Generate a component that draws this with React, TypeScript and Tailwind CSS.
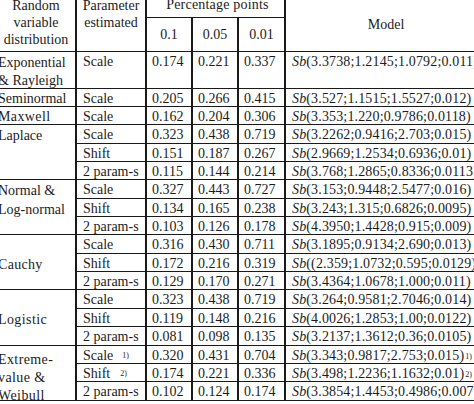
import React from "react";

type Row = { p: React.ReactNode; a: string; b: string; c: string; m: React.ReactNode };
type Group = { label: React.ReactNode; labelCls: string; rows: Row[]; tall?: boolean };

const M = (s: string, sup?: string) => (
  <>
    <i>Sb</i>
    {s}
    {sup ? <sup className="text-[8px] relative top-[-1px] ml-[1px] tracking-normal">{sup}</sup> : null}
  </>
);

const groups: Group[] = [
  {
    label: (
      <>
        Exponential
        <br />& Rayleigh
      </>
    ),
    labelCls: "row-span-2 pt-[2px] leading-[18px]",
    tall: true,
    rows: [{ p: "Scale", a: "0.174", b: "0.221", c: "0.337", m: M("(3.3738;1.2145;1.0792;0.011)") }],
  },
  {
    label: "Seminormal",
    labelCls: "pt-[2px] leading-[15px]",
    rows: [{ p: "Scale", a: "0.205", b: "0.266", c: "0.415", m: M("(3.527;1.1515;1.5527;0.012)") }],
  },
  {
    label: "Maxwell",
    labelCls: "pt-[2px] leading-[15px] tracking-[0.4px]",
    rows: [{ p: "Scale", a: "0.162", b: "0.204", c: "0.306", m: M("(3.353;1.220;0.9786;0.0118)") }],
  },
  {
    label: "Laplace",
    labelCls: "row-span-3 pt-[2px] leading-[18px]",
    rows: [
      { p: "Scale", a: "0.323", b: "0.438", c: "0.719", m: M("(3.2262;0.9416;2.703;0.015)") },
      { p: "Shift", a: "0.151", b: "0.187", c: "0.267", m: M("(2.9669;1.2534;0.6936;0.01)") },
      { p: "2 param-s", a: "0.115", b: "0.144", c: "0.214", m: M("(3.768;1.2865;0.8336;0.0113)") },
    ],
  },
  {
    label: (
      <>
        Normal &amp;
        <br />
        Log-normal
      </>
    ),
    labelCls: "row-span-3 pt-[2px] leading-[18.3px]",
    rows: [
      { p: "Scale", a: "0.327", b: "0.443", c: "0.727", m: M("(3.153;0.9448;2.5477;0.016)") },
      { p: "Shift", a: "0.134", b: "0.165", c: "0.238", m: M("(3.243;1.315;0.6826;0.0095)") },
      { p: "2 param-s", a: "0.103", b: "0.126", c: "0.178", m: M("(4.3950;1.4428;0.915;0.009)") },
    ],
  },
  {
    label: "Cauchy",
    labelCls: "row-span-3 pt-[21px] leading-[18px] tracking-[0.3px]",
    rows: [
      { p: "Scale", a: "0.316", b: "0.430", c: "0.711", m: M("(3.1895;0.9134;2.690;0.013)") },
      { p: "Shift", a: "0.172", b: "0.216", c: "0.319", m: M("((2.359;1.0732;0.595;0.0129)") },
      { p: "2 param-s", a: "0.129", b: "0.170", c: "0.271", m: M("(3.4364;1.0678;1.000;0.011)") },
    ],
  },
  {
    label: "Logistic",
    labelCls: "row-span-3 pt-[21px] leading-[18px] tracking-[0.4px]",
    rows: [
      { p: "Scale", a: "0.323", b: "0.438", c: "0.719", m: M("(3.264;0.9581;2.7046;0.014)") },
      { p: "Shift", a: "0.119", b: "0.148", c: "0.216", m: M("(4.0026;1.2853;1.00;0.0122)") },
      { p: "2 param-s", a: "0.081", b: "0.098", c: "0.135", m: M("(3.2137;1.3612;0.36;0.0105)") },
    ],
  },
  {
    label: (
      <>
        Extreme-
        <br />
        value &amp;
        <br />
        Weibull
      </>
    ),
    labelCls: "row-span-3 pt-[5px] leading-[18.3px] tracking-[0.4px]",
    rows: [
      {
        p: (
          <>
            Scale<sup className="text-[8px] relative top-[-2px] ml-[9px]">1)</sup>
          </>
        ),
        a: "0.320",
        b: "0.431",
        c: "0.704",
        m: M("(3.343;0.9817;2.753;0.015)", "1)"),
      },
      {
        p: (
          <>
            Shift<sup className="text-[8px] relative top-[-2px] ml-[10px]">2)</sup>
          </>
        ),
        a: "0.174",
        b: "0.221",
        c: "0.336",
        m: M("(3.498;1.2236;1.1632;0.01)", "2)"),
      },
      { p: "2 param-s", a: "0.102", b: "0.124", c: "0.174", m: M("(3.3854;1.4453;0.4986;0.007)") },
    ],
  },
];

export default function App() {
  const cell = "bg-white whitespace-nowrap overflow-visible";
  return (
    <div className="w-[474px] h-[404px] overflow-hidden bg-white text-[#1c1c1c] font-['Liberation_Serif',serif] text-[14px]">
      <div className="ml-[-7px] mt-[-4px] w-[500px] border-b border-[#1a1a1a] grid grid-cols-[82px_68px_44px_44px_45px_200px] grid-rows-[21px_33px_repeat(19,17.35px)] gap-x-[2px] gap-y-[1px] bg-[#1a1a1a]">
        <div className={`${cell} row-span-2 text-center leading-[17px] pt-[1px] pl-[4px]`}>
          Random
          <br />
          variable
          <br />
          distribution
        </div>
        <div className={`${cell} row-span-2 text-center leading-[17px] pt-[1px]`}>
          Parameter
          <br />
          estimated
        </div>
        <div className={`${cell} col-span-3 text-center leading-[17px] pt-[0px] pl-[4px] tracking-[0.2px]`}>Percentage points</div>
        <div className={`${cell} row-span-2 flex items-center justify-center pt-[1px]`}>Model</div>
        <div className={`${cell} flex items-center justify-center`}>0.1</div>
        <div className={`${cell} flex items-center justify-center`}>0.05</div>
        <div className={`${cell} flex items-center justify-center`}>0.01</div>
        {groups.map((g, gi) => (
          <React.Fragment key={gi}>
            <div className={`${cell} pl-[5px] ${g.labelCls}`}>{g.label}</div>
            {g.rows.map((r, ri) => {
              const base = `${cell} pt-[2px] leading-[15px] ${g.tall ? "row-span-2" : ""}`;
              return (
                <React.Fragment key={ri}>
                  <div className={`${base} pl-[6px]`}>{r.p}</div>
                  <div className={`${base} pl-[5px]`}>{r.a}</div>
                  <div className={`${base} pl-[5px]`}>{r.b}</div>
                  <div className={`${base} pl-[5px]`}>{r.c}</div>
                  <div className={`${base} pl-[6px] tracking-[0.15px]`}>{r.m}</div>
                </React.Fragment>
              );
            })}
          </React.Fragment>
        ))}
      </div>
    </div>
  );
}
